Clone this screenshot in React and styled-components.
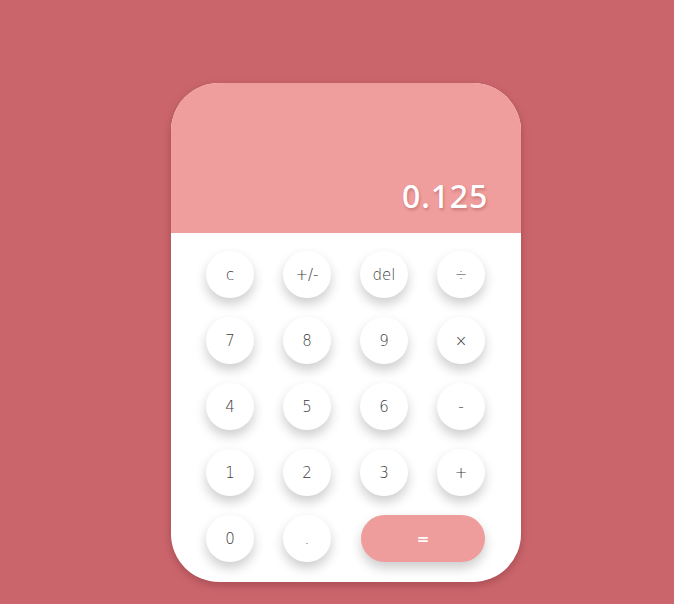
import React from "react";
import styled, { createGlobalStyle } from "styled-components";

const GlobalStyle = createGlobalStyle`
  html, body {
    margin: 0;
    padding: 0;
    background: #cb656c;
  }
  #root {
    min-height: 604px;
  }
`;

const keys = [
  ["c", "+/-", "del", "÷"],
  ["7", "8", "9", "×"],
  ["4", "5", "6", "-"],
  ["1", "2", "3", "+"],
];

function App() {
  return (
    <>
      <GlobalStyle />
      <StPage>
        <StCalculator>
          <StDisplay>
            <span>0.125</span>
          </StDisplay>
          <StKeypad>
            {keys.flat().map((k) => (
              <StKey key={k}>{k}</StKey>
            ))}
            <StKey>0</StKey>
            <StKey>.</StKey>
            <StKey $wide>=</StKey>
          </StKeypad>
        </StCalculator>
      </StPage>
    </>
  );
}

const StPage = styled.div`
  display: flex;
  justify-content: center;
  padding: 83px 0 0 18px;
  height: 604px;
  box-sizing: border-box;
`;

const StCalculator = styled.div`
  width: 350px;
  height: 499px;
  border-radius: 48px;
  overflow: hidden;
  background: #ffffff;
  box-shadow: 0 3px 8px rgba(60, 0, 0, 0.25);
  display: flex;
  flex-direction: column;
`;

const StDisplay = styled.div`
  height: 150px;
  background: #ef9d9d;
  display: flex;
  align-items: flex-end;
  justify-content: flex-end;
  padding: 0 33px 21px 0;
  box-sizing: border-box;
  span {
    font-family: "Noto Sans", "Open Sans", sans-serif;
    font-weight: 500;
    font-size: 32px;
    line-height: 1;
    color: #ffffff;
    letter-spacing: 0.8px;
    text-shadow: 1px 2px 3px rgba(120, 40, 40, 0.3);
  }
`;

const StKeypad = styled.div`
  display: grid;
  grid-template-columns: repeat(4, 48px);
  grid-auto-rows: 47px;
  column-gap: 29px;
  row-gap: 19px;
  padding: 18px 0 0 35px;
`;

const StKey = styled.div`
  grid-column: ${(p) => (p.$wide ? "span 2" : "auto")};
  margin-left: ${(p) => (p.$wide ? "1px" : "0")};
  border-radius: 24px;
  background: ${(p) => (p.$wide ? "#ee9c9c" : "#ffffff")};
  color: ${(p) => (p.$wide ? "#ffffff" : "#3a3a3a")};
  box-shadow: 0 6px 12px rgba(0, 0, 0, 0.2);
  display: flex;
  align-items: center;
  justify-content: center;
  font-family: "DejaVu Sans", sans-serif;
  font-weight: ${(p) => (p.$wide ? 600 : 300)};
  font-size: 15px;
`;

export default App;
